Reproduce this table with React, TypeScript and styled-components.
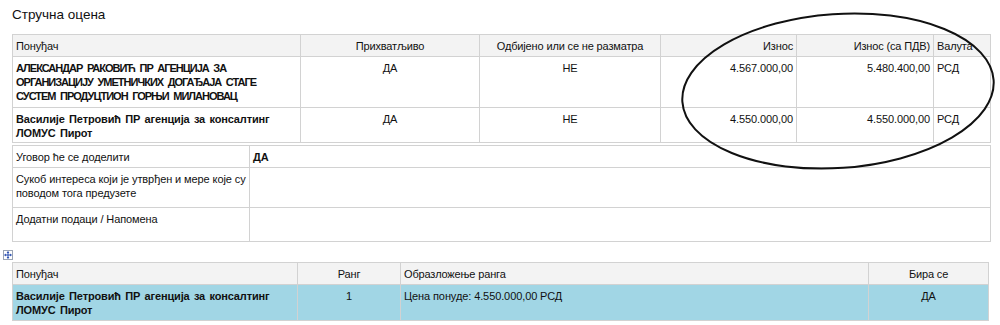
import React from "react";
import styled, { createGlobalStyle } from "styled-components";

const Global = createGlobalStyle`
  html, body { margin: 0; padding: 0; background: #fff; }
  body { font-family: "Liberation Sans", Arial, sans-serif; color: #111; }
`;

const Page = styled.div`
  position: relative;
  width: 1000px;
  height: 325px;
  overflow: hidden;
  padding: 6px 10px 0 3px;
  box-sizing: border-box;
`;

const Title = styled.h1`
  margin: 0 0 10px 9px;
  font-size: 13.5px;
  line-height: 18px;
  font-weight: normal;
  letter-spacing: 0;
`;

const Table = styled.table<{ $width: number; $gap?: number }>`
  width: ${(p) => p.$width}px;
  margin: ${(p) => p.$gap ?? 0}px 0 0 9px;
  border-collapse: collapse;
  table-layout: fixed;
  font-size: 11px;
  line-height: 14px;
`;

const Th = styled.th<{ $align?: string }>`
  background: #f3f3f3;
  border: 1px solid #d2d2d2;
  font-weight: normal;
  text-align: ${(p) => p.$align ?? "left"};
  padding: 0 3px;
  height: 21px;
  vertical-align: middle;
  letter-spacing: -0.15px;
`;

const Td = styled.td<{ $align?: string; $bold?: boolean; $caps?: boolean; $hl?: boolean; $h?: number }>`
  border: 1px solid #d2d2d2;
  background: ${(p) => (p.$hl ? "#a1d6e5" : "#fff")};
  text-align: ${(p) => p.$align ?? "left"};
  font-weight: ${(p) => (p.$bold ? "bold" : "normal")};
  letter-spacing: ${(p) => (p.$caps ? "-1px" : p.$bold ? "-0.15px" : "-0.1px")};
  word-spacing: ${(p) => (p.$caps ? "2.5px" : p.$bold ? "1.5px" : "0")};
  vertical-align: top;
  padding: 4px 3px 0 3px;
  height: ${(p) => (p.$h ? `${p.$h - 5}px` : "auto")};
`;

const IconRow = styled.div`
  height: 20px;
  display: flex;
  align-items: flex-start;
  padding-top: 8px;
  box-sizing: border-box;
`;

const Overlay = styled.svg`
  position: absolute;
  left: 0;
  top: 0;
  pointer-events: none;
`;

const MoveIcon = () => (
  <svg width="10" height="10" viewBox="0 0 10 10">
    <rect x="0.5" y="0.5" width="9" height="9" fill="#fff" stroke="#9aa4b4" />
    <path d="M5 1.5 L5 8.5 M1.5 5 L8.5 5" stroke="#2a4fb0" strokeWidth="1" />
    <path d="M5 1.3 L3.6 2.9 L6.4 2.9 Z M5 8.7 L3.6 7.1 L6.4 7.1 Z M1.3 5 L2.9 3.6 L2.9 6.4 Z M8.7 5 L7.1 3.6 L7.1 6.4 Z" fill="#2a4fb0" />
  </svg>
);

export default function App() {
  return (
    <>
      <Global />
      <Page>
        <Title>Стручна оцена</Title>
        <Table $width={978}>
          <colgroup>
            <col style={{ width: 288 }} />
            <col style={{ width: 179 }} />
            <col style={{ width: 181 }} />
            <col style={{ width: 136 }} />
            <col style={{ width: 137 }} />
            <col style={{ width: 57 }} />
          </colgroup>
          <thead>
            <tr>
              <Th>Понуђач</Th>
              <Th $align="center">Прихватљиво</Th>
              <Th $align="center">Одбијено или се не разматра</Th>
              <Th $align="right">Износ</Th>
              <Th $align="right">Износ (са ПДВ)</Th>
              <Th>Валута</Th>
            </tr>
          </thead>
          <tbody>
            <tr>
              <Td $bold $caps $h={51}>АЛЕКСАНДАР РАКОВИЋ ПР АГЕНЦИЈА ЗА ОРГАНИЗАЦИЈУ УМЕТНИЧКИХ ДОГАЂАЈА СТАГЕ СУСТЕМ ПРОДУЦТИОН ГОРЊИ МИЛАНОВАЦ</Td>
              <Td $align="center">ДА</Td>
              <Td $align="center">НЕ</Td>
              <Td $align="right">4.567.000,00</Td>
              <Td $align="right">5.480.400,00</Td>
              <Td>РСД</Td>
            </tr>
            <tr>
              <Td $bold $h={35}>Василије Петровић ПР агенција за консалтинг ЛОМУС Пирот</Td>
              <Td $align="center">ДА</Td>
              <Td $align="center">НЕ</Td>
              <Td $align="right">4.550.000,00</Td>
              <Td $align="right">4.550.000,00</Td>
              <Td>РСД</Td>
            </tr>
          </tbody>
        </Table>
        <Table $width={978} $gap={2}>
          <colgroup>
            <col style={{ width: 237 }} />
            <col style={{ width: 741 }} />
          </colgroup>
          <tbody>
            <tr>
              <Td $h={22}>Уговор ће се доделити</Td>
              <Td $bold>ДА</Td>
            </tr>
            <tr>
              <Td $h={40}>Сукоб интереса који је утврђен и мере које су поводом тога предузете</Td>
              <Td />
            </tr>
            <tr>
              <Td $h={34}>Додатни подаци / Напомена</Td>
              <Td />
            </tr>
          </tbody>
        </Table>
        <IconRow>
          <MoveIcon />
        </IconRow>
        <Table $width={976}>
          <colgroup>
            <col style={{ width: 285 }} />
            <col style={{ width: 103 }} />
            <col style={{ width: 468 }} />
            <col style={{ width: 120 }} />
          </colgroup>
          <thead>
            <tr>
              <Th>Понуђач</Th>
              <Th $align="center">Ранг</Th>
              <Th>Образложење ранга</Th>
              <Th $align="center">Бира се</Th>
            </tr>
          </thead>
          <tbody>
            <tr>
              <Td $hl $bold $h={36}>Василије Петровић ПР агенција за консалтинг ЛОМУС Пирот</Td>
              <Td $hl $align="center">1</Td>
              <Td $hl>Цена понуде: 4.550.000,00 РСД</Td>
              <Td $hl $align="center">ДА</Td>
            </tr>
          </tbody>
        </Table>
        <Overlay width="1000" height="325" viewBox="0 0 1000 325">
          <ellipse cx="838" cy="91" rx="156" ry="77" transform="rotate(-4 838 91)" fill="none" stroke="#111" strokeWidth="2" />
        </Overlay>
      </Page>
    </>
  );
}
